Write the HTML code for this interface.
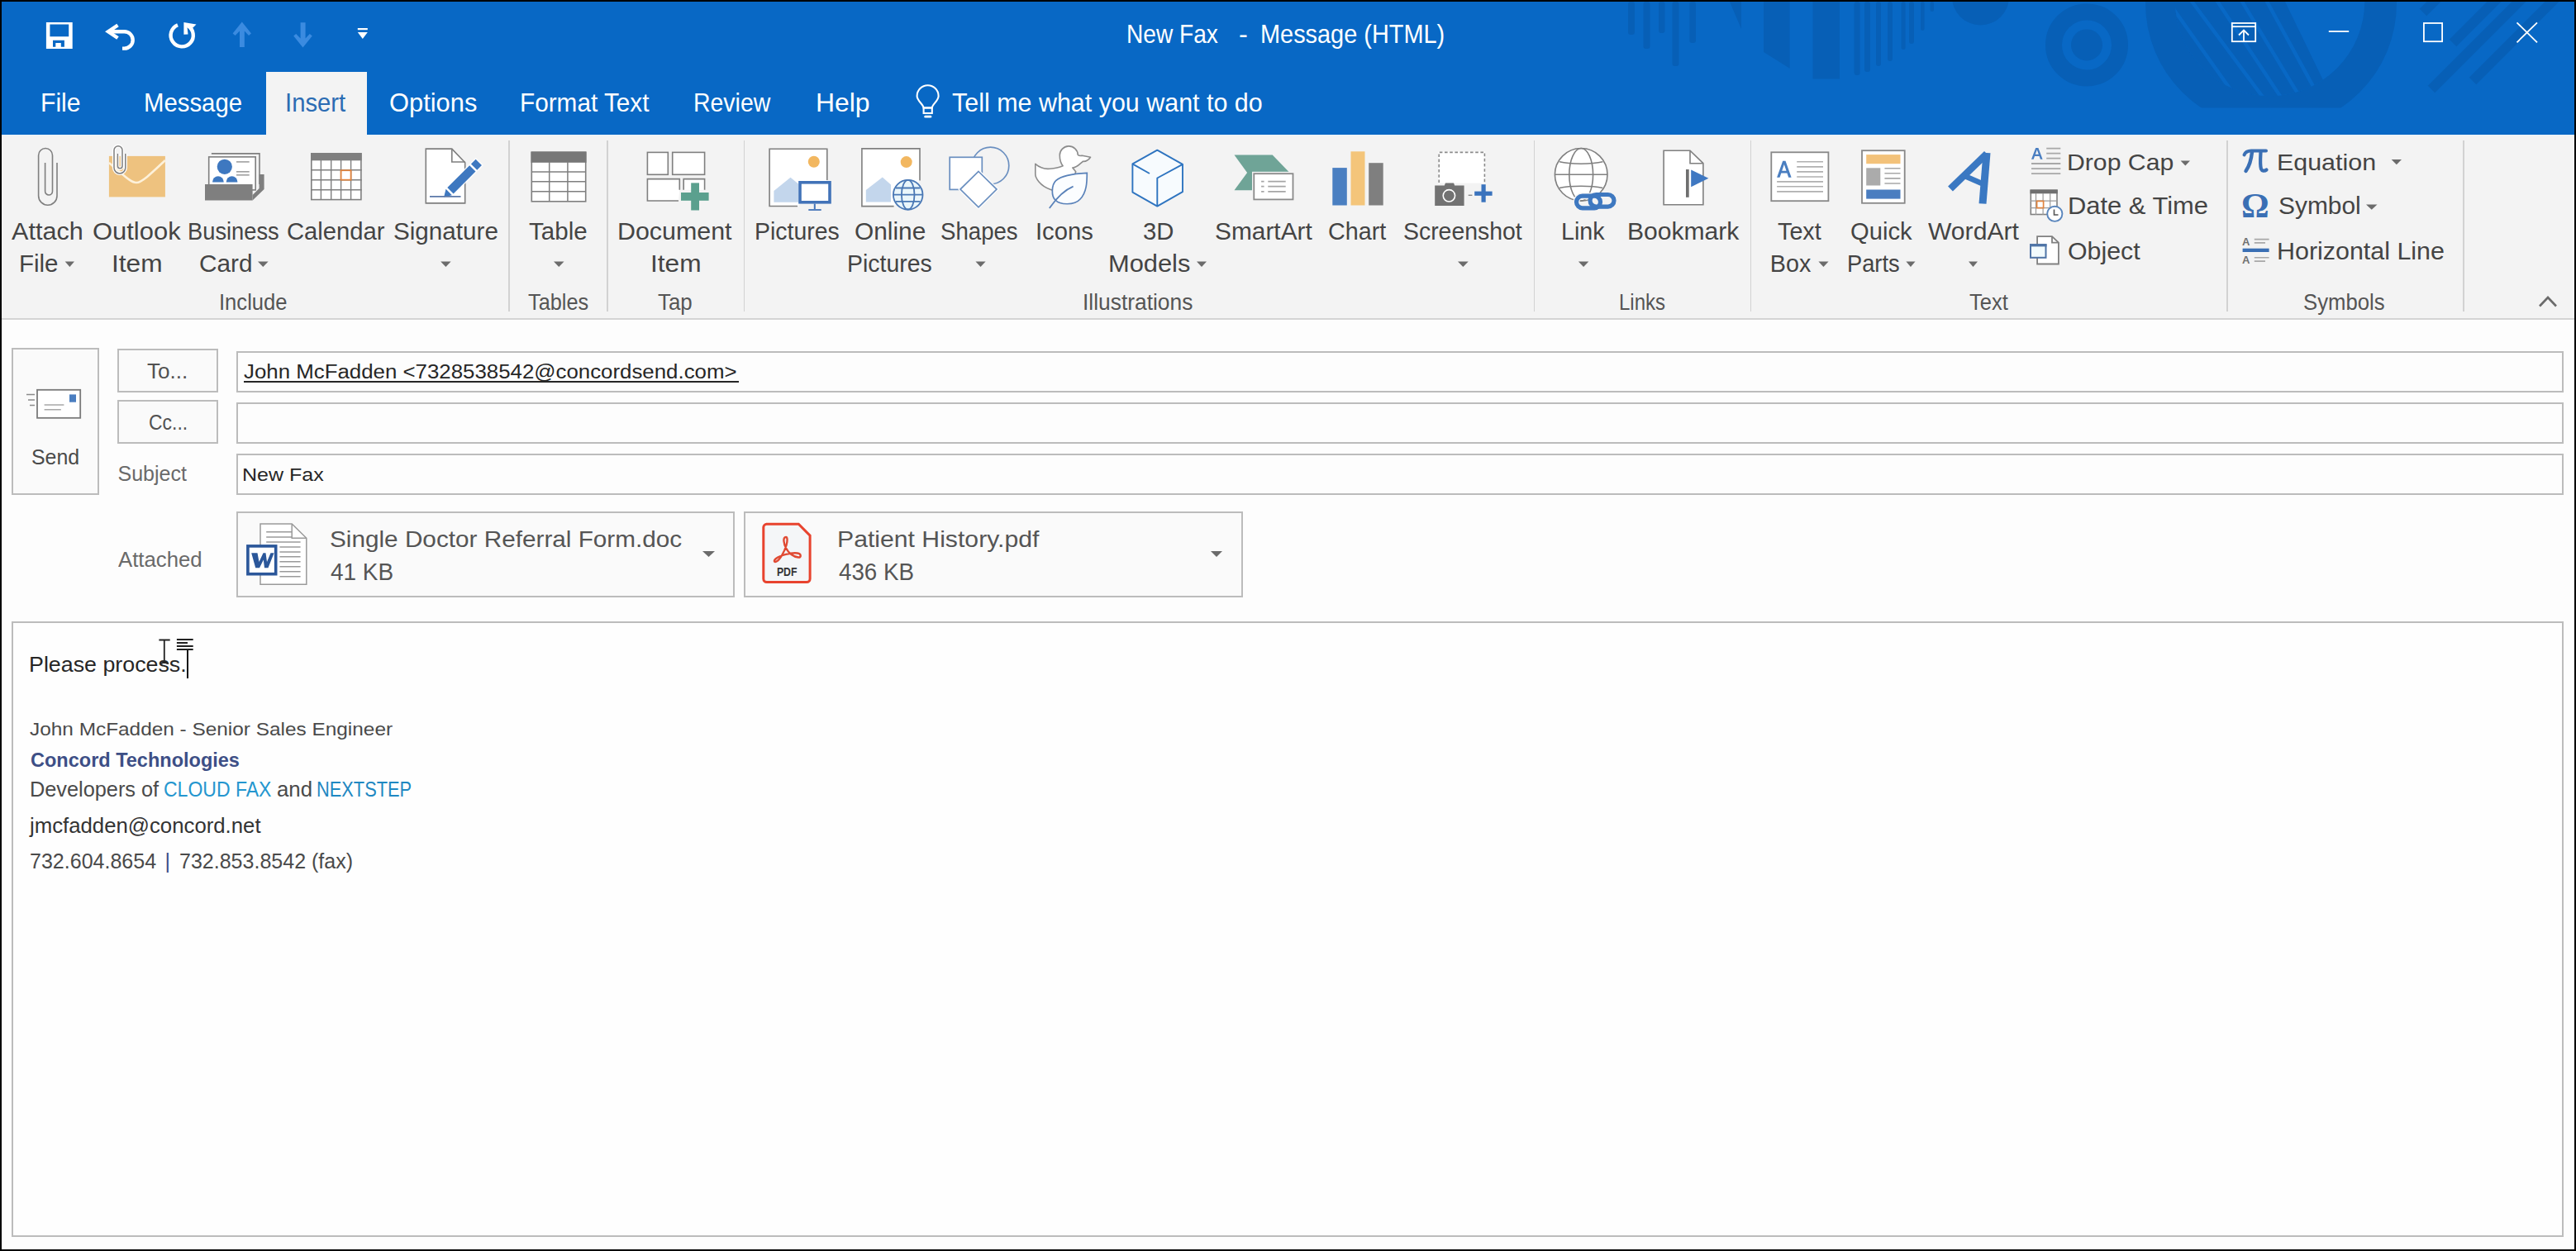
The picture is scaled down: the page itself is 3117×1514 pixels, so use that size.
<!DOCTYPE html>
<html><head><meta charset="utf-8"><style>
html,body{margin:0;padding:0}
body{width:3117px;height:1514px;overflow:hidden;background:#000;position:relative;font-family:"Liberation Sans",sans-serif}
.r{position:absolute}
.t{position:absolute;white-space:pre;line-height:1;transform-origin:0 0;font-family:"Liberation Sans",sans-serif}
svg{position:absolute;overflow:visible}
</style></head><body>
<div class="r" style="left:2px;top:2px;width:3113px;height:1510px;background:#fdfdfd;"></div>
<div class="r" style="left:2px;top:2px;width:3113px;height:161px;background:#0868c5;"></div>
<div class="r" style="left:2px;top:163px;width:3113px;height:222px;background:#f3f3f3;"></div>
<div class="r" style="left:2px;top:385px;width:3113px;height:2px;background:#d4d4d4;"></div>
<div class="r" style="left:2px;top:163px;width:3113px;height:2px;background:#edf2f7;"></div>
<div class="r" style="left:322px;top:87px;width:122px;height:78px;background:#f3f3f3;"></div>
<div class="r" style="left:615.25px;top:170px;width:1.5px;height:207px;background:#d2d2d2;"></div>
<div class="r" style="left:734.25px;top:170px;width:1.5px;height:207px;background:#d2d2d2;"></div>
<div class="r" style="left:899.75px;top:170px;width:1.5px;height:207px;background:#d2d2d2;"></div>
<div class="r" style="left:1855.75px;top:170px;width:1.5px;height:207px;background:#d2d2d2;"></div>
<div class="r" style="left:2117.75px;top:170px;width:1.5px;height:207px;background:#d2d2d2;"></div>
<div class="r" style="left:2694.25px;top:170px;width:1.5px;height:207px;background:#d2d2d2;"></div>
<div class="r" style="left:2980.25px;top:170px;width:1.5px;height:207px;background:#d2d2d2;"></div>
<div class="r" style="left:14px;top:421px;width:106px;height:178px;border:2px solid #bcbcbc;background:#fafafa;box-sizing:border-box"></div>
<div class="r" style="left:142px;top:421.5px;width:122px;height:53px;border:2px solid #bcbcbc;background:#fafafa;box-sizing:border-box"></div>
<div class="r" style="left:142px;top:483.5px;width:122px;height:53px;border:2px solid #bcbcbc;background:#fafafa;box-sizing:border-box"></div>
<div class="r" style="left:286px;top:425px;width:2816px;height:49.5px;border:2px solid #bcbcbc;background:#fdfdfd;box-sizing:border-box"></div>
<div class="r" style="left:286px;top:487px;width:2816px;height:49.5px;border:2px solid #bcbcbc;background:#fdfdfd;box-sizing:border-box"></div>
<div class="r" style="left:286px;top:549px;width:2816px;height:50px;border:2px solid #bcbcbc;background:#fdfdfd;box-sizing:border-box"></div>
<div class="r" style="left:286px;top:619px;width:603px;height:104px;border:2px solid #bcbcbc;background:#fafafa;box-sizing:border-box"></div>
<div class="r" style="left:900px;top:619px;width:604px;height:104px;border:2px solid #bcbcbc;background:#fafafa;box-sizing:border-box"></div>
<div class="r" style="left:14px;top:751.5px;width:3088px;height:745.5px;border:2px solid #bcbcbc;background:#fefefe;box-sizing:border-box"></div>
<div class="r" style="left:294.5px;top:460.5px;width:599px;height:2px;background:#262626;"></div>
<div class="r" style="left:225.7px;top:785px;width:2px;height:36px;background:#111;"></div>
<svg width="3117" height="1514" style="left:0;top:0"><g fill="#075fb6">
<rect x="1970" y="2" width="8" height="40" rx="3"/>
<rect x="1988.5" y="2" width="8" height="57" rx="3"/>
<rect x="2007" y="2" width="7.5" height="38" rx="3"/>
<rect x="2023.5" y="2" width="8" height="78" rx="3"/>
<rect x="2044.4" y="2" width="7.6" height="50" rx="3"/>
<path d="M2093,2 L2107,2 L2107,35 Z"/>
<path d="M2134,2 H2165.6 V82.7 L2134,63 Z"/>
<path d="M2193.5,2 H2226 V95.5 H2193.5 Z"/>
<rect x="2243.6" y="2" width="7" height="89" rx="3"/>
<rect x="2256" y="2" width="7" height="85" rx="3"/>
<rect x="2270" y="2" width="6" height="78" rx="3"/>
<rect x="2284" y="2" width="6" height="72" rx="3"/>
<rect x="2300.6" y="2" width="5" height="58" rx="2.5"/>
<rect x="2310" y="2" width="6" height="51" rx="3"/>
<rect x="2324" y="2" width="4.6" height="35" rx="2.3"/>
<rect x="2335.6" y="2" width="4.4" height="12" rx="2"/>
<path d="M2362,-4 A34.5,34.5 0 0 0 2431,-4 Z"/>
<circle cx="2525" cy="54.4" r="40" fill="none" stroke="#075fb6" stroke-width="20"/>
<circle cx="2525" cy="54.4" r="19"/>
</g>
<clipPath id="cp1"><rect x="2" y="2" width="3113" height="128.5"/></clipPath>
<clipPath id="cpi"><circle cx="2746.6" cy="1.6" r="114.7"/></clipPath>
<g clip-path="url(#cp1)">
<circle cx="2748" cy="4" r="152" fill="#075fb6"/>
<circle cx="2746.6" cy="1.6" r="114.7" fill="#0868c5"/>
<g clip-path="url(#cpi)">
<path d="M2600,-60 L2740.5,-48.5 L2839.2,155.2 L2600,200 Z" fill="#075fb6"/>
<g stroke="#0868c5" stroke-width="4.5">
<line x1="2614.2" y1="-11.3" x2="2717.3" y2="134.3"/>
<line x1="2630.0" y1="-28.1" x2="2761.2" y2="148.7"/>
<line x1="2662.4" y1="-29.5" x2="2779.7" y2="147.5"/>
<line x1="2694.6" y1="-28.4" x2="2798.2" y2="142.7"/>
<line x1="2727.6" y1="-26.4" x2="2815.1" y2="134.1"/>
</g>
</g>
</g>
<g stroke="#075fb6" stroke-width="12" stroke-linecap="butt">
<line x1="2932" y1="15" x2="2952" y2="-5"/>
<line x1="2968" y1="52" x2="3026" y2="-6"/>
<line x1="2942" y1="108" x2="3060" y2="-10"/>
<line x1="2992" y1="98" x2="3110" y2="-20"/>
</g>
<g fill="#fff">
<path d="M55.9,27.1 H87.7 V59 H55.9 Z M60.4,29.4 V44.3 H83.2 V29.4 Z M64,48.8 V56.8 H67.3 V52 H73.8 V56.8 H77.9 V48.8 Z" fill-rule="evenodd"/>
</g>
<g fill="none" stroke="#fff" stroke-width="4.4">
<path d="M142.5,30.5 L131,38.2 L142.5,46"/>
<path d="M131,38.2 H150.5 A10.2,10.2 0 0 1 150.5,58.6 H148"/>
<path d="M227,31 A13.6,13.6 0 1 1 215,30.2"/>
</g>
<path fill="#fff" d="M222.4,27 L237.5,29.6 L233.5,33.5 L226.5,32.5 L227.5,41.5 L222.4,41.8 Z"/>
<g fill="#3b8be0">
<path d="M292.8,26.4 L304,40.5 L301,43 L295.8,37.5 V57 H290 V37.5 L284.6,43 L281.6,40.5 Z"/>
<path d="M366.5,57.6 L377.8,43.5 L374.8,41 L369.6,46.5 V27.2 H363.6 V46.5 L358.2,41 L355.2,43.5 Z"/>
</g>
<g fill="#fff"><rect x="432.8" y="34" width="12" height="2.2"/><path d="M432.8,39 H444.8 L438.8,47 Z"/></g>

<g fill="none" stroke="#fff" stroke-width="1.8">
<rect x="2700.8" y="28" width="28.4" height="22.2"/>
<line x1="2700.8" y1="32.2" x2="2729.2" y2="32.2"/>
<line x1="2715" y1="37" x2="2715" y2="50"/>
<path d="M2709,42.5 L2715,36.5 L2721,42.5"/>
<line x1="2817.8" y1="38" x2="2842.2" y2="38"/>
<rect x="2932.9" y="28" width="22.2" height="22.2"/>
<path d="M3045.5,27.3 L3070,51.3 M3070,27.3 L3045.5,51.3"/>
</g>
<g fill="none" stroke="#7f7f7f" stroke-width="1.6">
<path d="M69,197 V237 A11.2,11.2 0 0 1 46.6,237 V188 A8.45,8.45 0 0 1 63.5,188 V231.5 A4.45,4.45 0 0 1 54.6,231.5 V197"/>
</g>
<rect x="131.9" y="188.9" width="68" height="49.5" fill="#eec27f"/>
<path d="M131.9,197 C150,212 158,221 165,221 C172,221 185,208 199.9,194" fill="none" stroke="#fdf1da" stroke-width="2.6"/>
<path d="M151.8,186 V203 A6.9,6.9 0 0 1 138,203 V181.7 A5,5 0 0 1 148,181.7 V201 A2.8,2.8 0 0 1 142.4,201 V186" fill="none" stroke="#fff" stroke-width="4.2"/>
<path d="M151.8,186 V203 A6.9,6.9 0 0 1 138,203 V181.7 A5,5 0 0 1 148,181.7 V201 A2.8,2.8 0 0 1 142.4,201 V186" fill="none" stroke="#7f7f7f" stroke-width="1.5"/>

<path d="M255.9,185.9 H314 V223" fill="none" stroke="#7f7f7f" stroke-width="1.6"/>
<rect x="252.7" y="189.9" width="56.5" height="40" fill="#fff" stroke="#7f7f7f" stroke-width="1.6"/>
<circle cx="271.8" cy="201.8" r="9.1" fill="#3e78c0"/>
<clipPath id="cpb"><rect x="250" y="190" width="60" height="30.5"/></clipPath>
<g clip-path="url(#cpb)" fill="#3e78c0"><circle cx="263.9" cy="220" r="6.8"/><circle cx="280.6" cy="220" r="6.8"/></g>
<g stroke="#a0a0a0" stroke-width="1.6"><line x1="286" y1="195.9" x2="301.7" y2="195.9"/><line x1="286" y1="207.8" x2="301.7" y2="207.8"/><line x1="286" y1="211.8" x2="301.7" y2="211.8"/></g>
<path d="M248,222.9 H305.6 V242.4 H248 Z" fill="#7f7f7f"/>
<path d="M313.6,211 H319.6 V228.9 L305.6,242.4 V236 L313.6,228 Z" fill="#7f7f7f"/>

<rect x="376.8" y="185.9" width="60.1" height="55.7" fill="#fff" stroke="#7f7f7f" stroke-width="1.6"/>
<rect x="376" y="185.1" width="61.7" height="9.2" fill="#7f7f7f"/>
<g stroke="#7f7f7f" stroke-width="1.4">
<line x1="388.4" y1="194" x2="388.4" y2="242"/><line x1="400.7" y1="194" x2="400.7" y2="242"/><line x1="412.6" y1="194" x2="412.6" y2="242"/><line x1="424.6" y1="194" x2="424.6" y2="242"/>
<line x1="376" y1="205.8" x2="437.7" y2="205.8"/><line x1="376" y1="217.7" x2="437.7" y2="217.7"/><line x1="376" y1="229.7" x2="437.7" y2="229.7"/>
</g>
<rect x="412.6" y="206.2" width="12" height="11.5" fill="#fff" stroke="#e0843f" stroke-width="1.8"/>

<path d="M515.3,180.1 H546.8 L562.7,196.8 V245.9 H515.3 Z" fill="#fff" stroke="#7f7f7f" stroke-width="1.6"/>
<path d="M546.8,180.1 V196 H562.7" fill="none" stroke="#7f7f7f" stroke-width="1.6"/>
<path d="M556,198 L566,208 L536.6,237 L537.5,227 Z" fill="#f3f3f3" opacity="0"/>
<g transform="translate(558.4,217.3) rotate(-45)">
<rect x="-31" y="-6.6" width="62" height="13.2" fill="#fff" opacity="0.85"/>
<rect x="-19" y="-5.2" width="38" height="10.4" fill="#3e78c0"/>
<rect x="21.5" y="-5.2" width="8" height="10.4" fill="#3e78c0"/>
<path d="M-21.5,-5.2 V5.2 L-30,0 Z" fill="#3e78c0"/>
</g>
<line x1="520" y1="237.9" x2="557.5" y2="237.9" stroke="#5b78a8" stroke-width="1.8"/>

<rect x="643.3" y="184.3" width="65.4" height="59.5" fill="#fff" stroke="#7f7f7f" stroke-width="1.6"/>
<rect x="642.5" y="183.5" width="67" height="13.3" fill="#777"/>
<g stroke="#7f7f7f" stroke-width="1.5">
<line x1="664.7" y1="196" x2="664.7" y2="244"/><line x1="686.9" y1="196" x2="686.9" y2="244"/>
<line x1="643" y1="207.9" x2="709" y2="207.9"/><line x1="643" y1="219.8" x2="709" y2="219.8"/><line x1="643" y1="231.8" x2="709" y2="231.8"/>
</g>
<g fill="#fff" stroke="#7f7f7f" stroke-width="1.6">
<rect x="783.4" y="184.4" width="24.9" height="26.9"/>
<rect x="813.7" y="184.4" width="38.9" height="26.9"/>
<path d="M821,243 H783.4 V216.6 H822.3 V229.8"/>
<path d="M827.2,229.8 V216.6 H852.6 V229.8"/>
</g>
<g fill="#5ba08e"><rect x="836.2" y="221.4" width="9.8" height="33.1"/><rect x="824" y="233" width="33.6" height="9.8"/></g>

<path d="M965,249.5 H931.1 V180.3 H1000.8 V218" fill="#fff" stroke="#7f7f7f" stroke-width="1.6"/>
<circle cx="984.8" cy="195.8" r="7" fill="#f2b760"/>
<path d="M936.4,244.7 V231 L956.5,214.8 L966,222.5 V244.7 Z" fill="#c3d6ec"/>
<rect x="968" y="220.8" width="36" height="24" fill="#fff" stroke="#4273b8" stroke-width="3.6"/>
<line x1="985.8" y1="246.6" x2="985.8" y2="253" stroke="#4273b8" stroke-width="2"/>
<line x1="978.3" y1="254" x2="993.7" y2="254" stroke="#4273b8" stroke-width="1.8"/>

<path d="M78.7,316.6 H90 L84.35,322.9 Z" fill="#6b6b6b"/>
<path d="M312,316.6 H324.6 L318.3,322.9 Z" fill="#6b6b6b"/>
<path d="M533.2,316.6 H545.6 L539.4000000000001,322.9 Z" fill="#6b6b6b"/>
<path d="M670,316.6 H682.5 L676.25,322.9 Z" fill="#6b6b6b"/>
<path d="M1180.5,316.6 H1192.6 L1186.55,322.9 Z" fill="#6b6b6b"/>
<path d="M1448,316.6 H1460 L1454.0,322.9 Z" fill="#6b6b6b"/>
<path d="M1764,316.6 H1776.7 L1770.35,322.9 Z" fill="#6b6b6b"/>
<path d="M1909.9,316.6 H1922.3 L1916.1,322.9 Z" fill="#6b6b6b"/>
<path d="M2200.4,316.6 H2212.5 L2206.45,322.9 Z" fill="#6b6b6b"/>
<path d="M2306.4,316.6 H2317.5 L2311.95,322.9 Z" fill="#6b6b6b"/>
<path d="M2382,316.6 H2393 L2387.5,322.9 Z" fill="#6b6b6b"/>
<path d="M2638.6,194.5 H2650 L2644.3,200.5 Z" fill="#6b6b6b"/>
<path d="M2893.7,193 H2906 L2899.85,199.3 Z" fill="#6b6b6b"/>
<path d="M2863,247.5 H2876.5 L2869.75,253.8 Z" fill="#6b6b6b"/>
<path d="M850,667 H865 L857.5,674 Z" fill="#6b6b6b"/>
<path d="M1465,667 H1479 L1472.0,674 Z" fill="#6b6b6b"/>
<path d="M3073,370.5 L3083,360 L3093,370.5" fill="none" stroke="#6b6b6b" stroke-width="2.6"/>
<g fill="none" stroke="#fff" stroke-width="2.1">
<path d="M1117.6,130.5 C1117,126 1109.6,122 1109.6,116.3 A13,13 0 0 1 1135.6,116.3 C1135.6,122 1128.2,126 1127.8,130.5 Z"/>
<rect x="1117.6" y="130.5" width="10.2" height="6.5"/>
</g>
<rect x="1118.3" y="139.8" width="9" height="2.8" rx="1.4" fill="#fff"/>
<path d="M1081.6,249.6 H1042.9 V179.9 H1113 V218.6" fill="#fff" stroke="#7f7f7f" stroke-width="1.6"/>
<circle cx="1096.7" cy="196.1" r="7" fill="#f2b760"/>
<path d="M1047.8,244.6 V229.9 L1067.8,214.5 L1078,223.5 V244.6 Z" fill="#c3d6ec"/>
<g fill="#eaf6fb" stroke="#4a78b5" stroke-width="1.8">
<circle cx="1098.7" cy="235.7" r="17.8"/>
<ellipse cx="1098.7" cy="235.7" rx="7.8" ry="17.8" fill="none"/>
<path d="M1084,227.5 H1113.4 M1081,235.7 H1116.4 M1084,243.8 H1113.4" fill="none"/>
</g>
<circle cx="1198.5" cy="200.5" r="22.3" fill="none" stroke="#6a8fc0" stroke-width="1.7"/>
<rect x="1149.2" y="190.3" width="39.1" height="39.1" fill="#fff" stroke="#6a8fc0" stroke-width="1.7"/>
<path d="M1184,207.5 L1206,229.1 L1184,250.8 L1162,229.1 Z" fill="#fff" stroke="#fff" stroke-width="4"/>
<path d="M1184,207.5 L1206,229.1 L1184,250.8 L1162,229.1 Z" fill="#fff" stroke="#6a8fc0" stroke-width="1.7"/>
<path d="M1252.8,198.4 C1258,203 1263,205 1270.6,204.2 C1278,203.5 1283,202 1286.1,200.7 C1283,197 1282.3,193 1282.3,188.3 A11,11 0 0 1 1304.3,187.5 C1306,189 1308,188.5 1309.4,188.3 L1319.5,190.2 C1317,194 1313,195.5 1310.2,195.3 C1306,199 1303,203 1297.8,203 L1301.7,207.7 L1295,230 C1285,232 1275,231 1271.4,229.5 C1258,225 1252.8,215 1252.8,210.8 Z" fill="#fff" stroke="#8c8c8c" stroke-width="1.6" stroke-linejoin="round"/>
<path d="M1315.3,209.3 C1300,210 1285,212 1277.6,218.6 C1272,224 1272,238 1277,242 C1282,248 1300,249 1307,241 C1315,233 1315.3,220 1315.3,209.3 Z" fill="#fbfdff" stroke="#5a82b9" stroke-width="1.7"/>
<path d="M1269.8,252 C1278,240 1288,230 1298.6,225.6" fill="none" stroke="#5a82b9" stroke-width="1.7"/>
<g fill="#f7fbfe" stroke="#2e74c0" stroke-width="1.9" stroke-linejoin="round">
<path d="M1400.3,181.7 L1431,198.8 V232.2 L1400.3,249.6 L1370.4,232.6 V198.4 Z"/>
<path d="M1431,198.8 L1400.3,215.5 V249.6" fill="none"/>
<path d="M1370.4,198.4 L1391,210" fill="none"/>
</g>
<path d="M1493.5,187.5 H1539.7 L1560.5,209 L1539.7,230.2 H1493.5 L1509.1,208.9 Z" fill="#6fa497"/>
<rect x="1515" y="207.8" width="52" height="36" fill="#f3f3f3"/>
<rect x="1517.3" y="210.2" width="47.2" height="31.2" fill="#fff" stroke="#8a8a8a" stroke-width="1.8"/>
<g stroke="#a6a6a6" stroke-width="1.8">
<path d="M1526.1,219.7 H1529.6 M1534.3,219.7 H1555.7 M1526.1,225.6 H1529.6 M1534.3,225.6 H1555.7 M1526.1,231.8 H1529.6 M1534.3,231.8 H1555.7"/>
</g>
<rect x="1612.3" y="203.1" width="17.5" height="45.4" fill="#4a7fc1"/>
<rect x="1634.5" y="183.3" width="17" height="65.2" fill="#f4c57a"/>
<rect x="1656.2" y="197.2" width="17.5" height="51.3" fill="#7f7f7f"/>
<rect x="1740.4" y="183.6" width="56.8" height="38" fill="#fff"/>
<path d="M1741.2,221 V184.4 H1796.4 V221" fill="none" stroke="#8a8a8a" stroke-width="1.6" stroke-dasharray="3.6,2.6"/>
<path d="M1736.2,224.6 H1747.8 L1749,221.4 H1759 L1760.2,224.6 H1771.6 V248.9 H1736.2 Z" fill="#727272"/>
<circle cx="1753.4" cy="236.8" r="7.2" fill="#727272" stroke="#fff" stroke-width="1.6"/>
<line x1="1776.7" y1="236.3" x2="1781.4" y2="236.3" stroke="#8a8a8a" stroke-width="1.4"/>
<rect x="1792.5" y="223.2" width="5.2" height="21.5" fill="#3a73bd"/>
<rect x="1784.2" y="231.6" width="21.4" height="5.2" fill="#3a73bd"/>
<g fill="#fff" stroke="#808080" stroke-width="1.6">
<circle cx="1913.2" cy="211.3" r="31.8"/>
<ellipse cx="1913.2" cy="211.3" rx="14.4" ry="31.8" fill="none"/>
<path d="M1887,195.8 C1900,199 1926,199 1939.4,195.8 M1881.4,211.3 H1945 M1887,227.5 C1900,224.5 1926,224.5 1939.4,227.5" fill="none"/>
</g>
<rect x="1903" y="230" width="56" height="28" rx="10" fill="#f3f3f3" opacity="0"/>
<rect x="1907.5" y="237.2" width="29" height="14.6" rx="7.3" fill="none" stroke="#f3f3f3" stroke-width="8"/>
<rect x="1907.5" y="237.2" width="29" height="14.6" rx="7.3" fill="none" stroke="#3e78c0" stroke-width="5.2"/>
<rect x="1924" y="235.5" width="29" height="14.6" rx="7.3" fill="none" stroke="#3e78c0" stroke-width="5.2"/>
</g>
<path d="M2013.1,182.2 H2045 L2060.9,197.7 V247.8 H2013.1 Z" fill="#fff" stroke="#7f7f7f" stroke-width="1.6"/>
<path d="M2045,182.2 V197.7 H2060.9" fill="none" stroke="#7f7f7f" stroke-width="1.6"/>
<rect x="2040" y="205" width="3.7" height="33.8" fill="#6f6f6f"/>
<path d="M2046.2,205.4 L2067.4,215.8 L2046.2,226.2 Z" fill="#3f78c2"/>
<rect x="2143.3" y="184.3" width="69.1" height="58.9" fill="#fff" stroke="#888" stroke-width="1.8"/>
<path d="M2150.1,214.8 L2157.2,194.8 H2160.5 L2167.6,214.8 H2164.2 L2162.4,209.5 H2155.3 L2153.5,214.8 Z M2156.2,206.8 H2161.5 L2158.85,199 Z" fill="#4a7ec0" fill-rule="evenodd"/>
<g stroke="#b0b0b0" stroke-width="1.6">
<path d="M2174.2,195.8 H2206 M2174.2,201.9 H2206 M2174.2,207.9 H2206 M2174.2,214 H2206 M2150.1,219.9 H2206 M2150.1,225.8 H2206 M2150.1,231.9 H2206"/>
</g>
<rect x="2253" y="182.2" width="51.7" height="63.6" fill="#fff" stroke="#888" stroke-width="1.8"/>
<rect x="2258.2" y="187.1" width="41.3" height="11.1" fill="#f3c27a"/>
<rect x="2258.2" y="203.3" width="17.1" height="21.2" fill="#ababab"/>
<g stroke="#a8a8a8" stroke-width="1.6"><path d="M2280.4,203.8 H2299.5 M2280.4,209.8 H2299.5 M2280.4,215.9 H2299.5 M2280.4,222 H2299.5"/></g>
<rect x="2258.2" y="229.5" width="41.3" height="11.1" fill="#4a7dc0"/>
<g fill="none" stroke="#3a78c2" stroke-linecap="butt">
<path d="M2360,228.5 L2404,186" stroke-width="8.5"/>
<path d="M2404,185 L2399,246.5" stroke-width="9"/>
<path d="M2378.5,213.5 L2398,222" stroke-width="6.5"/>
</g>
<path d="M2458,192.7 L2463.2,179 H2466.4 L2471.6,192.7 H2468.9 L2467.6,189 H2462 L2460.7,192.7 Z M2462.8,186.8 H2466.8 L2464.8,181.3 Z" fill="#4a7ec0" fill-rule="evenodd"/>
<g stroke="#a8a8a8" stroke-width="1.8"><path d="M2476.2,179.6 H2493.3 M2476.2,185.6 H2493.3 M2476.2,191.7 H2493.3 M2458,198 H2493.3 M2458,204.1 H2493.3 M2458,210.2 H2493.3"/></g>
<rect x="2457.3" y="230.3" width="31.7" height="29.2" fill="#fff" stroke="#808080" stroke-width="1.6"/>
<rect x="2456.5" y="229.5" width="33.3" height="4.8" fill="#707070"/>
<g stroke="#9a9a9a" stroke-width="1.2"><path d="M2463.5,234 V260 M2472.1,234 V260 M2480.7,234 V260 M2457,243.2 H2489.5 M2457,251.7 H2489.5"/></g>
<rect x="2464.6" y="243.4" width="8" height="8.2" fill="#fff" stroke="#e0843f" stroke-width="1.7"/>
<circle cx="2486.3" cy="258.8" r="9.1" fill="#fff" stroke="#5a86bd" stroke-width="1.9"/>
<path d="M2485.5,253.5 V260 H2490.5" fill="none" stroke="#555" stroke-width="1.6"/>
<path d="M2465.1,286.1 H2483 L2490.9,293.6 V319.5 H2465.1 Z" fill="#fff" stroke="#808080" stroke-width="1.8"/>
<path d="M2483,286.1 V293.6 H2490.9" fill="none" stroke="#808080" stroke-width="1.8"/>
<rect x="2456" y="294.2" width="21" height="19.6" fill="#f3f3f3" opacity="0"/>
<rect x="2457" y="296.2" width="18.5" height="15.6" fill="#f2fbfd" stroke="#4f74a6" stroke-width="2"/>
<rect x="2456" y="295.2" width="20.5" height="3.2" fill="#4f74a6"/>
<g fill="none" stroke="#3a6fb4" stroke-linecap="round">
<path d="M2715.5,187.5 C2717,183.5 2720,182.5 2724,182.5 H2742" stroke-width="4"/>
<path d="M2725,184 C2724,194 2721,202 2717.5,207" stroke-width="4.4"/>
<path d="M2735.5,184 C2735,193 2734.5,200 2736,204.5 C2737,207 2740,207.5 2742.5,205.5" stroke-width="4.2"/>
</g>
<text x="2712" y="263.1" font-family="Liberation Serif" font-weight="bold" font-size="42" fill="#3a6fb4">Ω</text>
<g fill="#707070" font-family="Liberation Sans" font-size="13" font-weight="bold"><text x="2713" y="296.6">A</text><text x="2713" y="319.3">A</text></g>
<g stroke="#a8a8a8" stroke-width="1.6"><path d="M2727.8,289.6 H2745.6 M2727.8,293.9 H2741 M2727.8,311.8 H2745.6 M2727.8,316.1 H2741"/></g>
<rect x="2713.6" y="300.7" width="32" height="4.3" fill="#3a6fb4"/>
<rect x="45" y="471.8" width="52.2" height="34" fill="#fff" stroke="#7a7a7a" stroke-width="1.8"/>
<rect x="84" y="477.4" width="8" height="9.3" fill="#4a7ec0"/>
<g stroke="#a8a8a8" stroke-width="1.5"><path d="M53.6,490 H77.4 M53.6,495.8 H73.8"/></g>
<g stroke="#8a8a8a" stroke-width="1.6"><path d="M32,477.5 H42 M34,484 H42 M36,490.5 H42"/></g>
<path d="M315,633.9 H353.2 L370.8,651.2 V707.3 H315 Z" fill="#fff" stroke="#9a9a9a" stroke-width="1.5"/>
<path d="M353.2,633.9 V651.2 H370.8" fill="none" stroke="#9a9a9a" stroke-width="1.5"/>
<g stroke="#9a9a9a" stroke-width="1.5"><path d="M322.2,643.8 H353.2 M322.2,649.9 H353.2 M322.2,655.9 H363.6 M338.4,662 H363.6 M338.4,668 H363.6 M338.4,673.8 H363.6 M338.4,679.8 H363.6 M338.4,685.7 H363.6 M338.4,691.8 H363.6 M338.4,697.8 H363.6"/></g>
<rect x="299.9" y="660.9" width="33.8" height="33.8" fill="#fff" stroke="#2b579a" stroke-width="3.6"/>
<path d="M304.2,669.2 H311.5 L313.5,680 L318.5,669.2 H321.5 L323,680 L327.5,669.2 H331.6 L324.5,687.2 H320 L318.8,677.5 L314,687.2 H309.2 Z" fill="#2b579a"/>
<path d="M927,634.3 H966.3 L980.1,648.2 V700.6 A4,4 0 0 1 976.1,704.6 H927.8 A4,4 0 0 1 923.8,700.6 V638.3 A4,4 0 0 1 927.8,634.3 Z" fill="#f4f6f8" stroke="#e8432e" stroke-width="3"/>
<path d="M951,650 C947,650 948,658 951.5,664 C954,669 960,674 966,674.5 C970,675 969.5,670 965,669.5 C957,668.5 944,672 939,676 C935.5,679 937,681 939.5,679.5 C944,677 949,668 951.5,660 C953,655 953,650 951,650 Z" fill="none" stroke="#e04a33" stroke-width="2.4" stroke-linejoin="round"/>
<text x="939.9" y="697" font-family="Liberation Sans" font-weight="bold" font-size="15" fill="#333" transform="translate(939.9,0) scale(0.82,1) translate(-939.9,0)">PDF</text>
<g stroke="#222" stroke-width="1.8" fill="none">
<path d="M192.4,774.5 H205.7 M198.8,774.5 V803 M193.5,803 C196,803 198.8,801 198.8,801 C198.8,801 201.5,803 204,803"/>
</g>
<g stroke="#222" stroke-width="2.2"><path d="M213.9,774 H233.7 M213.9,778 H227 M213.9,782 H233.7 M213.9,786 H233.7"/></g></svg>
<div class="t" style="left:1362.8px;top:26.18px;font-size:30.44px;color:#ffffff;transform:scaleX(0.9235)">New Fax</div>
<div class="t" style="left:1498.99px;top:26.4px;font-size:31px;color:#ffffff;transform:scaleX(1.0444)">-</div>
<div class="t" style="left:1524.74px;top:26.18px;font-size:30.44px;color:#ffffff;transform:scaleX(0.9493)">Message (HTML)</div>
<div class="t" style="left:48.64px;top:108.71px;font-size:30.58px;color:#ffffff;transform:scaleX(0.9859)">File</div>
<div class="t" style="left:173.71px;top:108.71px;font-size:30.58px;color:#ffffff;transform:scaleX(0.9598)">Message</div>
<div class="t" style="left:344.71px;top:108.71px;font-size:30.58px;color:#2b6cb3;transform:scaleX(0.9570)">Insert</div>
<div class="t" style="left:470.55px;top:108.71px;font-size:30.58px;color:#ffffff;transform:scaleX(1.0088)">Options</div>
<div class="t" style="left:628.58px;top:108.71px;font-size:30.58px;color:#ffffff;transform:scaleX(0.9728)">Format Text</div>
<div class="t" style="left:838.78px;top:108.71px;font-size:30.58px;color:#ffffff;transform:scaleX(0.9303)">Review</div>
<div class="t" style="left:986.51px;top:108.71px;font-size:30.58px;color:#ffffff;transform:scaleX(1.0429)">Help</div>
<div class="t" style="left:1151.52px;top:108.71px;font-size:30.58px;color:#ffffff;transform:scaleX(0.9957)">Tell me what you want to do</div>
<div class="t" style="left:14.4px;top:265.05px;font-size:30.29px;color:#444444;transform:scaleX(1.0097)">Attach</div>
<div class="t" style="left:111.55px;top:265.05px;font-size:30.29px;color:#444444;transform:scaleX(1.0217)">Outlook</div>
<div class="t" style="left:227.47px;top:265.05px;font-size:30.29px;color:#444444;transform:scaleX(0.9013)">Business</div>
<div class="t" style="left:347.13px;top:265.05px;font-size:30.29px;color:#444444;transform:scaleX(0.9649)">Calendar</div>
<div class="t" style="left:476.07px;top:265.05px;font-size:30.29px;color:#444444;transform:scaleX(0.9788)">Signature</div>
<div class="t" style="left:639.54px;top:265.05px;font-size:30.29px;color:#444444;transform:scaleX(0.9757)">Table</div>
<div class="t" style="left:747.22px;top:265.05px;font-size:30.29px;color:#444444;transform:scaleX(1.0037)">Document</div>
<div class="t" style="left:913.08px;top:265.05px;font-size:30.29px;color:#444444;transform:scaleX(0.9395)">Pictures</div>
<div class="t" style="left:1033.6px;top:265.05px;font-size:30.29px;color:#444444;transform:scaleX(0.9856)">Online</div>
<div class="t" style="left:1138.14px;top:265.05px;font-size:30.29px;color:#444444;transform:scaleX(0.9122)">Shapes</div>
<div class="t" style="left:1252.72px;top:265.05px;font-size:30.29px;color:#444444;transform:scaleX(0.9654)">Icons</div>
<div class="t" style="left:1382.58px;top:265.05px;font-size:30.29px;color:#444444;transform:scaleX(0.9666)">3D</div>
<div class="t" style="left:1469.87px;top:265.05px;font-size:30.29px;color:#444444;transform:scaleX(0.9860)">SmartArt</div>
<div class="t" style="left:1607.45px;top:265.05px;font-size:30.29px;color:#444444;transform:scaleX(0.9483)">Chart</div>
<div class="t" style="left:1698.11px;top:265.05px;font-size:30.29px;color:#444444;transform:scaleX(0.9383)">Screenshot</div>
<div class="t" style="left:1889.46px;top:265.05px;font-size:30.29px;color:#444444;transform:scaleX(0.9482)">Link</div>
<div class="t" style="left:1969.35px;top:265.05px;font-size:30.29px;color:#444444;transform:scaleX(0.9928)">Bookmark</div>
<div class="t" style="left:2150.55px;top:265.05px;font-size:30.29px;color:#444444;transform:scaleX(0.9495)">Text</div>
<div class="t" style="left:2239.43px;top:265.05px;font-size:30.29px;color:#444444;transform:scaleX(0.9636)">Quick</div>
<div class="t" style="left:2332.6px;top:265.05px;font-size:30.29px;color:#444444;transform:scaleX(0.9942)">WordArt</div>
<div class="t" style="left:22.7px;top:305.44px;font-size:28.73px;color:#444444;transform:scaleX(1.0260)">File</div>
<div class="t" style="left:134.72px;top:305.44px;font-size:28.73px;color:#444444;transform:scaleX(1.1028)">Item</div>
<div class="t" style="left:240.6px;top:305.44px;font-size:28.73px;color:#444444;transform:scaleX(1.0369)">Card</div>
<div class="t" style="left:786.52px;top:305.44px;font-size:28.73px;color:#444444;transform:scaleX(1.1028)">Item</div>
<div class="t" style="left:1025.38px;top:305.44px;font-size:28.73px;color:#444444;transform:scaleX(0.9907)">Pictures</div>
<div class="t" style="left:1340.59px;top:305.44px;font-size:28.73px;color:#444444;transform:scaleX(1.0730)">Models</div>
<div class="t" style="left:2141.75px;top:305.44px;font-size:28.73px;color:#444444">Box</div>
<div class="t" style="left:2234.57px;top:305.44px;font-size:28.73px;color:#444444;transform:scaleX(0.9482)">Parts</div>
<div class="t" style="left:2500.94px;top:183.99px;font-size:27.02px;color:#444444;transform:scaleX(1.1179)">Drop Cap</div>
<div class="t" style="left:2501.58px;top:235.49px;font-size:29.01px;color:#444444;transform:scaleX(1.0657)">Date &amp; Time</div>
<div class="t" style="left:2501.88px;top:288.9px;font-size:30.01px;color:#444444;transform:scaleX(1.0102)">Object</div>
<div class="t" style="left:2755.22px;top:183.99px;font-size:27.02px;color:#444444;transform:scaleX(1.1257)">Equation</div>
<div class="t" style="left:2756.66px;top:235.49px;font-size:29.01px;color:#444444;transform:scaleX(1.0317)">Symbol</div>
<div class="t" style="left:2755.22px;top:288.9px;font-size:30.01px;color:#444444;transform:scaleX(1.0142)">Horizontal Line</div>
<div class="t" style="left:265px;top:351.65px;font-size:27.31px;color:#555555;transform:scaleX(0.9385)">Include</div>
<div class="t" style="left:638.6px;top:351.65px;font-size:27.31px;color:#555555;transform:scaleX(0.9272)">Tables</div>
<div class="t" style="left:796.3px;top:351.65px;font-size:27.31px;color:#555555;transform:scaleX(0.9484)">Tap</div>
<div class="t" style="left:1310.44px;top:351.65px;font-size:27.31px;color:#555555;transform:scaleX(0.9658)">Illustrations</div>
<div class="t" style="left:1959.42px;top:351.65px;font-size:27.31px;color:#555555;transform:scaleX(0.8805)">Links</div>
<div class="t" style="left:2382.6px;top:351.65px;font-size:27.31px;color:#555555;transform:scaleX(0.9347)">Text</div>
<div class="t" style="left:2787.2px;top:351.65px;font-size:27.31px;color:#555555;transform:scaleX(0.9417)">Symbols</div>
<div class="t" style="left:38.22px;top:541.08px;font-size:25.03px;color:#4a4a4a;transform:scaleX(0.9952)">Send</div>
<div class="t" style="left:178.09px;top:437.03px;font-size:25.74px;color:#525252;transform:scaleX(1.0127)">To...</div>
<div class="t" style="left:179.92px;top:499.33px;font-size:25.74px;color:#525252;transform:scaleX(0.8910)">Cc...</div>
<div class="t" style="left:142.52px;top:561.38px;font-size:25.03px;color:#6a6a6a">Subject</div>
<div class="t" style="left:294.5px;top:437.63px;font-size:24.75px;color:#262626;transform:scaleX(1.0440)">John McFadden &lt;7328538542@concordsend.com&gt;</div>
<div class="t" style="left:293.04px;top:563.25px;font-size:22.9px;color:#262626;transform:scaleX(1.0932)">New Fax</div>
<div class="t" style="left:143px;top:664.2px;font-size:26.6px;color:#6a6a6a;transform:scaleX(0.9682)">Attached</div>
<div class="t" style="left:399.47px;top:637.95px;font-size:28.3px;color:#555555;transform:scaleX(1.0505)">Single Doctor Referral Form.doc</div>
<div class="t" style="left:399.96px;top:677.89px;font-size:29.01px;color:#555555;transform:scaleX(0.9643)">41 KB</div>
<div class="t" style="left:1013.04px;top:637.95px;font-size:28.3px;color:#555555;transform:scaleX(1.0668)">Patient History.pdf</div>
<div class="t" style="left:1014.97px;top:677.89px;font-size:29.01px;color:#555555;transform:scaleX(0.9561)">436 KB</div>
<div class="t" style="left:35.4px;top:790.77px;font-size:26.45px;color:#262626;transform:scaleX(1.0139)">Please process.</div>
<div class="t" style="left:36.12px;top:871.25px;font-size:22.9px;color:#4a4a4a;transform:scaleX(1.0650)">John McFadden - Senior Sales Engineer</div>
<div class="t" style="left:36.77px;top:907.78px;font-size:24.04px;color:#3d4f86;transform:scaleX(0.9782);font-weight:bold">Concord Technologies</div>
<div class="t" style="left:35.52px;top:943.36px;font-size:24.89px;color:#4a4a4a;transform:scaleX(1.0171)">Developers of</div>
<div class="t" style="left:198.42px;top:943.36px;font-size:24.89px;color:#2496cf;transform:scaleX(0.9246)">CLOUD FAX</div>
<div class="t" style="left:334.59px;top:943.3px;font-size:25px;color:#4a4a4a;transform:scaleX(1.0322)">and</div>
<div class="t" style="left:383.19px;top:943.36px;font-size:24.89px;color:#1f88c2;transform:scaleX(0.8770)">NEXTSTEP</div>
<div class="t" style="left:36.3px;top:986.9px;font-size:25.19px;color:#333333;transform:scaleX(1.0226)">jmcfadden@concord.net</div>
<div class="t" style="left:36.33px;top:1029.76px;font-size:24.89px;color:#4a4a4a;transform:scaleX(1.0062)">732.604.8654</div>
<div class="t" style="left:199.55px;top:1029.7px;font-size:25px;color:#3d4f86">|</div>
<div class="t" style="left:216.83px;top:1029.76px;font-size:24.89px;color:#4a4a4a;transform:scaleX(1.0059)">732.853.8542 (fax)</div>
<div class="r" style="left:0px;top:0px;width:3117px;height:2px;background:#000;"></div><div class="r" style="left:0px;top:0px;width:2px;height:1514px;background:#000;"></div><div class="r" style="left:3115px;top:0px;width:2px;height:1514px;background:#000;"></div><div class="r" style="left:0px;top:1512px;width:3117px;height:2px;background:#000;"></div>
</body></html>
